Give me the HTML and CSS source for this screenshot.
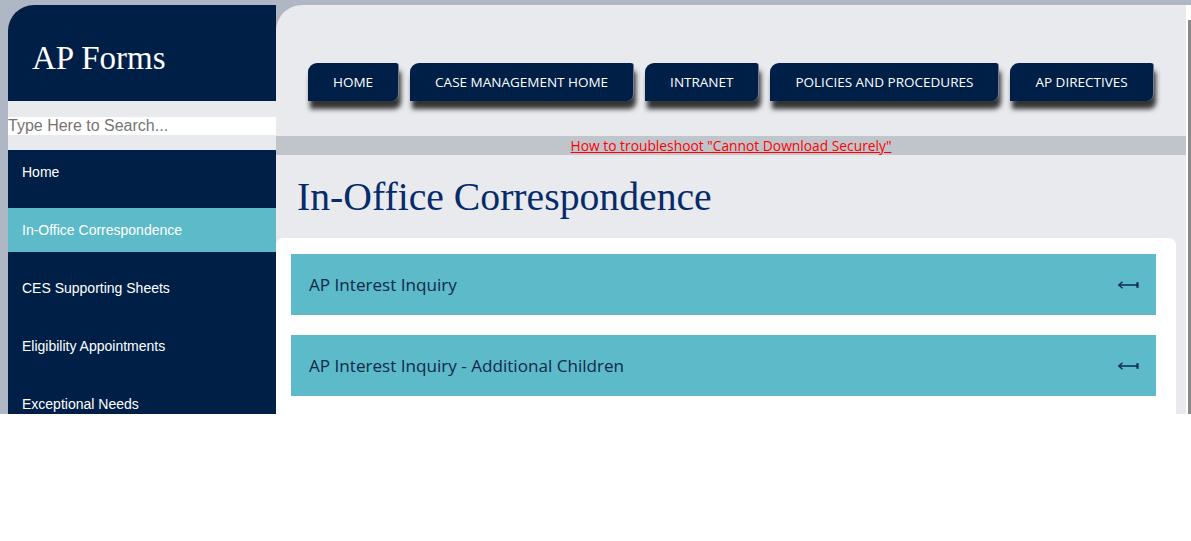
FILE: index.html
```html
<!DOCTYPE html>
<html lang="en">
<head>
<meta charset="utf-8">
<title>AP Forms</title>
<link rel="stylesheet" href="styles.css">
</head>
<body>
<div class="frame">
  <aside class="sidebar">
    <div class="brand">AP Forms</div>
    <div class="search-band">
      <input class="search" type="text" placeholder="Type Here to Search...">
    </div>
    <nav class="side-nav">
      <a class="side-item" href="#">Home</a>
      <a class="side-item active" href="#">In-Office Correspondence</a>
      <a class="side-item" href="#">CES Supporting Sheets</a>
      <a class="side-item" href="#">Eligibility Appointments</a>
      <a class="side-item" href="#">Exceptional Needs</a>
    </nav>
  </aside>
  <main class="main">
    <div class="top-nav">
      <a class="top-btn" href="#">HOME</a>
      <a class="top-btn" href="#">CASE MANAGEMENT HOME</a>
      <a class="top-btn" href="#">INTRANET</a>
      <a class="top-btn" href="#">POLICIES AND PROCEDURES</a>
      <a class="top-btn" href="#">AP DIRECTIVES</a>
    </div>
    <div class="notice"><a href="#">How to troubleshoot "Cannot Download Securely"</a></div>
    <h1 class="title">In-Office Correspondence</h1>
    <section class="card">
      <div class="acc-item">
        <span>AP Interest Inquiry</span>
        <svg class="acc-icon" width="22" height="8" viewBox="0 0 22 8"><path d="M2 4H20" stroke="#0b2a57" stroke-width="1.5" fill="none"/><path d="M5.5 0.8L1.8 4L5.5 7.2" stroke="#0b2a57" stroke-width="1.4" fill="none"/><path d="M20.5 1.2V6.8" stroke="#0b2a57" stroke-width="2.2"/></svg>
      </div>
      <div class="acc-item">
        <span>AP Interest Inquiry - Additional Children</span>
        <svg class="acc-icon" width="22" height="8" viewBox="0 0 22 8"><path d="M2 4H20" stroke="#0b2a57" stroke-width="1.5" fill="none"/><path d="M5.5 0.8L1.8 4L5.5 7.2" stroke="#0b2a57" stroke-width="1.4" fill="none"/><path d="M20.5 1.2V6.8" stroke="#0b2a57" stroke-width="2.2"/></svg>
      </div>
    </section>
  </main>
  <div class="scroll-col"><div class="scroll-thumb"></div></div>
</div>
</body>
</html>
```

FILE: styles.css
```css
* { box-sizing: border-box; }
html, body { margin: 0; padding: 0; background: #ffffff; }
.frame {
  display: flex;
  width: 1191px;
  height: 414px;
  padding: 5px 0 0 8px;
  background: #b0b7c4;
  overflow: hidden;
}
.sidebar {
  width: 268px;
  flex: none;
  background: #001f47;
  border-top-left-radius: 26px;
  overflow: hidden;
  font-family: "Liberation Sans", Arial, sans-serif;
}
.brand {
  height: 96px;
  padding: 35px 0 0 24px;
  color: #ffffff;
  font-family: "Liberation Serif", "Times New Roman", serif;
  font-size: 33px;
  line-height: 37px;
}
.search-band {
  height: 49px;
  padding-top: 16px;
  background: #e9eaed;
}
.search {
  display: block;
  width: 100%;
  height: 18px;
  margin: 0;
  padding: 0;
  border: none;
  outline: none;
  background: #ffffff;
  font-family: "Liberation Sans", Arial, sans-serif;
  font-size: 16px;
  color: #333;
}
.search::placeholder { color: #757575; }
.side-nav { display: flex; flex-direction: column; gap: 14px; }
.side-item {
  display: flex;
  align-items: center;
  height: 44px;
  padding-left: 14px;
  color: #ffffff;
  font-size: 14px;
  text-decoration: none;
}
.side-item.active { background: #5dbac8; }
.main {
  width: 910px;
  flex: none;
  background: #e9eaed;
  border-top-left-radius: 26px;
  overflow: hidden;
}
.top-nav {
  display: flex;
  gap: 11px;
  padding: 58px 0 0 32px;
  height: 131px;
}
.top-btn {
  display: flex;
  align-items: center;
  height: 38px;
  padding: 0 25px;
  background: #001f47;
  color: #ffffff;
  font-family: "Open Sans", "Noto Sans", sans-serif;
  font-size: 13.5px;
  text-decoration: none;
  border-radius: 9px 3px 7px 0;
  border-right: 1px solid #6f7d92;
  box-shadow: 2px 8px 5px rgba(0, 0, 0, 0.78);
}
.notice {
  display: flex;
  justify-content: center;
  align-items: center;
  height: 19px;
  background: #c0c5cc;
  font-family: "Open Sans", "Noto Sans", sans-serif;
  font-size: 13.8px;
}
.notice a { color: #ff0000; text-decoration: underline; }
.title {
  margin: 0;
  height: 83px;
  padding: 20px 0 0 21px;
  font-family: "Liberation Serif", "Times New Roman", serif;
  font-weight: normal;
  font-size: 39.7px;
  line-height: 44px;
  color: #062b6a;
}
.card {
  margin-right: 10px;
  padding: 16px 20px 0 15px;
  background: #ffffff;
  border-radius: 7px 7px 0 0;
  height: 200px;
}
.acc-item {
  display: flex;
  align-items: center;
  justify-content: space-between;
  height: 61px;
  margin-bottom: 20px;
  padding: 0 17px 0 18px;
  background: #5dbac8;
  color: #10294a;
  font-family: "Open Sans", "Noto Sans", sans-serif;
  font-size: 17.1px;
}
.acc-icon { display: block; }
.scroll-col {
  width: 5px;
  flex: none;
  background: #ffffff;
  padding: 15px 0 0 2px;
}
.scroll-thumb {
  width: 3px;
  height: 100%;
  background: #8a8a8a;
}
```
